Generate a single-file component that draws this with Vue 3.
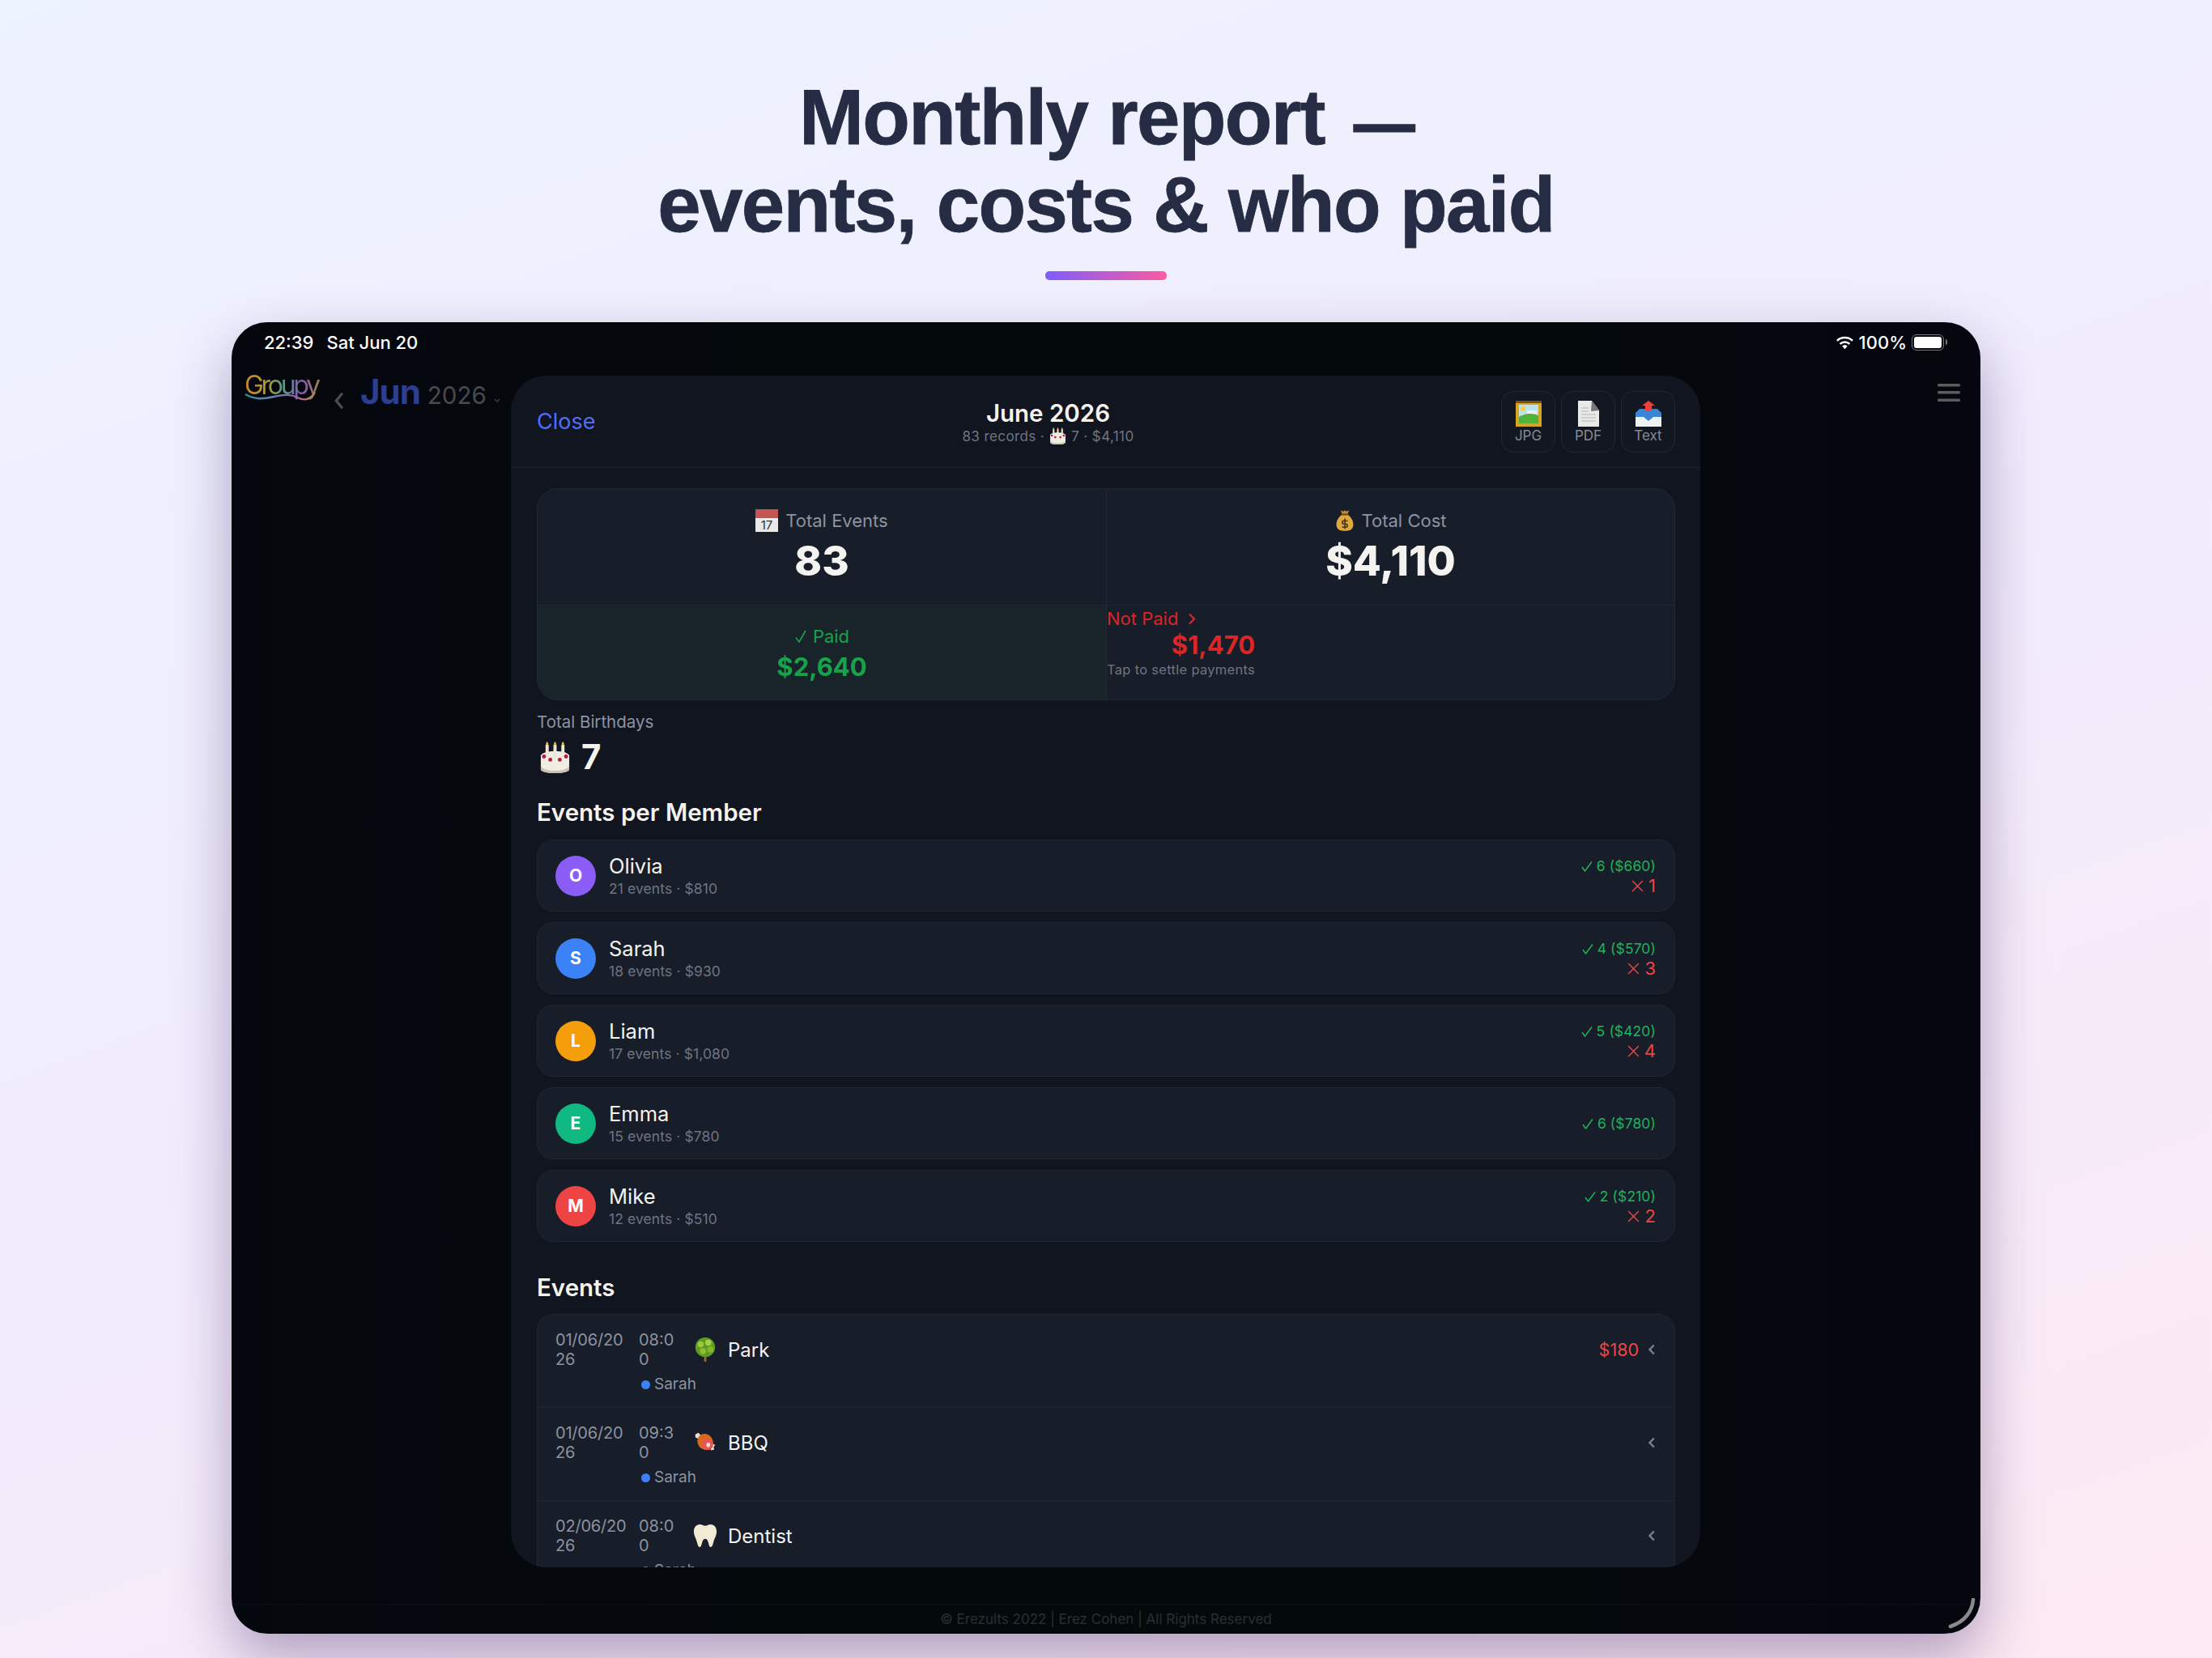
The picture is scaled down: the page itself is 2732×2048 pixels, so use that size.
<template>
  <div class="page">
    <header class="hero">
      <h1>Monthly report <span class="dash">—</span><br />events, costs &amp; who paid</h1>
      <div class="hero-bar" />
    </header>

    <div class="device">
      <div class="status">
        <div class="status-left">
          <span>22:39</span>
          <span>Sat Jun 20</span>
        </div>
        <div class="status-right">
          <svg class="wifi" viewBox="0 0 24 18">
            <path d="M12 17.5 8.6 13.8a5 5 0 0 1 6.8 0Z" fill="#fff" />
            <path d="M5.8 11a9 9 0 0 1 12.4 0" fill="none" stroke="#fff" stroke-width="2.6" />
            <path d="M2 6.8a14.5 14.5 0 0 1 20 0" fill="none" stroke="#fff" stroke-width="2.6" />
          </svg>
          <span>100%</span>
          <span class="battery"><span class="battery-fill" /></span>
        </div>
      </div>

      <div class="app-bar">
        <div class="logo">
          <span class="logo-text">Groupy</span>
          <svg class="logo-wave" viewBox="0 0 90 14">
            <path d="M1 3c12 7 22 6 36 3s22-3 30 1 14 4 22-6" fill="none" stroke="url(#wave)" stroke-width="2.4" />
            <defs>
              <linearGradient id="wave" x1="0" x2="1">
                <stop offset="0" stop-color="#2f8f8a" />
                <stop offset=".35" stop-color="#5f86b8" />
                <stop offset=".7" stop-color="#a35fb0" />
                <stop offset="1" stop-color="#b98a46" />
              </linearGradient>
            </defs>
          </svg>
        </div>
        <svg class="prev" viewBox="0 0 12 20"><path d="M10 1.500 3 10l7 8.500" fill="none" stroke="#4a4d50" stroke-width="3" /></svg>
        <span class="month">Jun</span>
        <span class="year">2026</span>
        <svg class="caret" viewBox="0 0 8 6"><path d="M1 1l3 3 3-3" fill="none" stroke="#3a3c3e" stroke-width="1.500" /></svg>
        <svg class="caret" viewBox="0 0 8 6"><path d="M1 1l3 3 3-3" fill="none" stroke="#4a4d50" stroke-width="1.500" /></svg>
      </div>

      <svg class="menu" viewBox="0 0 28 22">
        <rect y="0" width="28" height="3.500" rx="1.500" />
        <rect y="9" width="28" height="3.500" rx="1.500" />
        <rect y="18.500" width="28" height="3.500" rx="1.500" />
      </svg>

      <footer class="legal">© Erezults 2022 | Erez Cohen | All Rights Reserved</footer>

      <svg class="corner" viewBox="0 0 36 38">
        <path d="M33 2c-1 14-10 27-28 33" fill="none" stroke="#8a8a8a" stroke-width="4.500" stroke-linecap="round" />
      </svg>

      <section class="modal">
        <div class="modal-head">
          <button class="close">Close</button>
          <div class="modal-title">
            <div class="title">June 2026</div>
            <div class="subtitle">
              83 records ·
              <svg class="sub-cake" viewBox="0 0 40 40"><use href="#cake" /></svg>
              7 · $4,110
            </div>
          </div>
          <div class="exports">
            <button class="export">
              <svg viewBox="0 0 32 32">
                <rect x="0" y="0" width="32" height="32" fill="#d9a520" />
                <rect x="0" y="0" width="32" height="3" fill="#7a5210" />
                <rect x="4" y="5" width="24" height="23" fill="#bfe3ee" />
                <path d="M4 20c8-5 16-5 24-2v10H4Z" fill="#52b33a" />
                <circle cx="9" cy="10" r="3" fill="#f5d33a" />
                <path d="M14 12h12v4H14Z" fill="#eaf4f6" />
              </svg>
              <span>JPG</span>
            </button>
            <button class="export">
              <svg viewBox="0 0 32 32">
                <path d="M3 0h17l9 12v20H3Z" fill="#e9e9e9" />
                <path d="M20 0l9 12-10 1Z" fill="#777" />
                <path d="M7 9h9M7 13h9M7 17h18M7 21h18M7 25h18" stroke="#c6c6c6" stroke-width="1.500" />
              </svg>
              <span>PDF</span>
            </button>
            <button class="export">
              <svg viewBox="0 0 32 32">
                <path d="M0 15h32v17H0Z" fill="#eef0f2" />
                <path d="M5 10h22l5 5v5H22l-6 5-6-5H0v-5Z" fill="#3a86d6" />
                <path d="M12 11V6H8l8-6 8 6h-4v7h-8Z" fill="#ef3f3a" />
              </svg>
              <span>Text</span>
            </button>
          </div>
        </div>

        <div class="modal-body">
          <div class="stats">
            <div class="stat">
              <div class="stat-label">
                <svg class="stat-icon" viewBox="0 0 28 28">
                  <rect y="0" width="28" height="28" fill="#e9e9e9" />
                  <rect y="0" width="28" height="11" fill="#c25452" />
                  <text x="14" y="25" text-anchor="middle" class="cal-day">17</text>
                </svg>
                Total Events
              </div>
              <div class="stat-value">83</div>
            </div>
            <div class="stat stat-right">
              <div class="stat-label">
                <svg class="stat-icon bag" viewBox="0 0 28 32">
                  <path d="M10 7C3 13 1 19 2 24c1 6 7 7 12 7s11-1 12-7c1-5-1-11-8-17Z" fill="#dfa83c" />
                  <path d="M8 1l4 2 2-2 2 2 4-2-2 6h-8Z" fill="#c28c2e" />
                  <rect x="9" y="6" width="10" height="2.500" fill="#6f4a1b" />
                  <path d="M14 13v15M18 16.500h-5.500c-3 0-3 4.500 0 4.500h3c3 0 3 4.500 0 4.500H10" fill="none" stroke="#4e3a1a" stroke-width="2" />
                </svg>
                Total Cost
              </div>
              <div class="stat-value">$4,110</div>
            </div>
            <div class="stat-paid">
              <div class="paid-label">
                <svg viewBox="0 0 16 16"><path d="M2 9.500 6 15 14 1" fill="none" stroke="#16a34a" stroke-width="1.600" /></svg>
                Paid
              </div>
              <div class="paid-value">$2,640</div>
            </div>
            <div class="stat-unpaid">
              <div class="unpaid-inner">
                <div class="unpaid-label">
                  Not Paid
                  <svg viewBox="0 0 10 16"><path d="M2 2l6 6-6 6" fill="none" stroke="#dc2626" stroke-width="2.200" /></svg>
                </div>
                <div class="unpaid-value">$1,470</div>
                <div class="unpaid-hint">Tap to settle payments</div>
              </div>
            </div>
          </div>

          <div class="birthdays">
            <div class="birthdays-label">Total Birthdays</div>
            <div class="birthdays-value">
              <svg class="cake" viewBox="0 0 40 40">
                <defs>
                  <g id="cake">
                    <path d="M2 18c0-3 8-6 18-6s18 3 18 6v17c0 3-8 5-18 5S2 38 2 35Z" fill="#f1ece4" />
                    <path d="M2 30c0 4 8 7 18 7s18-3 18-7v5c0 3-8 5-18 5S2 38 2 35Z" fill="#c9c2b6" />
                    <rect x="8" y="4" width="4" height="16" fill="#efe6d8" />
                    <rect x="18" y="4" width="4" height="18" fill="#efe6d8" />
                    <rect x="28" y="4" width="4" height="16" fill="#efe6d8" />
                    <path d="M10 0c2 2 2 4 0 5-2-1-2-3 0-5ZM20 0c2 2 2 4 0 5-2-1-2-3 0-5ZM30 0c2 2 2 4 0 5-2-1-2-3 0-5Z" fill="#e7c23c" />
                    <circle cx="6" cy="19" r="2.500" fill="#b9163a" />
                    <circle cx="14" cy="23" r="2.500" fill="#b9163a" />
                    <circle cx="26" cy="23" r="2.500" fill="#b9163a" />
                    <circle cx="34" cy="19" r="2.500" fill="#b9163a" />
                  </g>
                </defs>
                <use href="#cake" />
              </svg>
              <span>7</span>
            </div>
          </div>

          <h2 class="section section-members">Events per Member</h2>
          <div class="members">
            <div v-for="m in members" :key="m.name" class="member">
              <span class="avatar" :style="{ background: m.color }">{{ m.name[0] }}</span>
              <div class="member-info">
                <div class="member-name">{{ m.name }}</div>
                <div class="member-sub">{{ m.events }} events · {{ m.cost }}</div>
              </div>
              <div class="member-tally">
                <div class="tally-ok">
                  <svg viewBox="0 0 14 14"><path d="M1 8l3.500 5L13 1.500" fill="none" stroke="#1fb25a" stroke-width="1.500" /></svg>
                  {{ m.paid }}
                </div>
                <div v-if="m.unpaid" class="tally-no">
                  <svg viewBox="0 0 14 14"><path d="M1 1l12 12M13 1 1 13" fill="none" stroke="#ef4444" stroke-width="1.300" /></svg>
                  {{ m.unpaid }}
                </div>
              </div>
            </div>
          </div>

          <h2 class="section section-events">Events</h2>
          <div class="events">
            <div v-for="e in events" :key="e.date + e.title" class="event">
              <div class="event-top">
                <div class="event-date">{{ e.date }}</div>
                <div class="event-time">{{ e.time }}</div>
                <svg class="event-icon" viewBox="0 0 32 32">
                  <template v-if="e.icon === 'tree'">
                    <rect x="14.500" y="24" width="3" height="8" fill="#9a6a1e" />
                    <circle cx="16" cy="13" r="13" fill="#5f9a22" />
                    <circle cx="10" cy="9" r="4" fill="#9cc83c" />
                    <circle cx="20" cy="7" r="4" fill="#a7cf45" />
                    <circle cx="23" cy="16" r="4" fill="#86b82f" />
                    <circle cx="13" cy="18" r="4" fill="#8fbe33" />
                  </template>
                  <template v-else-if="e.icon === 'meat'">
                    <path d="M3 5l4-2 3 3 10 9 5 2 4 2-2 3 1 3-4 1-2-3-4-3L7 11 3 9Z" fill="#e8e2d6" />
                    <ellipse cx="16" cy="15" rx="10" ry="11" transform="rotate(-35 16 15)" fill="#d9691c" />
                    <ellipse cx="19" cy="18" rx="7" ry="8" transform="rotate(-35 19 18)" fill="#e2565a" />
                    <ellipse cx="20" cy="19" rx="2.500" ry="3" fill="#f3d9cf" />
                  </template>
                  <template v-else>
                    <path d="M9 1c3 0 5 2 7 2s4-2 7-2c5 0 8 4 8 9 0 6-3 9-4 14-1 4-2 7-4 7-3 0-2-11-7-11s-4 11-7 11c-2 0-3-3-4-7C4 19 1 16 1 10c0-5 3-9 8-9Z" fill="#f3ead6" />
                  </template>
                </svg>
                <span class="event-title">{{ e.title }}</span>
                <span v-if="e.amount" class="event-amount">{{ e.amount }}</span>
                <svg class="event-chevron" viewBox="0 0 8 14"><path d="M6.800 1.500 1.500 7l5.300 5.500" fill="none" stroke="#7b818c" stroke-width="2.400" /></svg>
              </div>
              <div class="event-owner">
                <span class="owner-dot" />
                Sarah
              </div>
            </div>
          </div>
        </div>
      </section>
    </div>
  </div>
</template>

<script setup>
const members = [
  { name: 'Olivia', events: 21, cost: '$810', paid: '6 ($660)', unpaid: 1, color: '#8b5cf6' },
  { name: 'Sarah', events: 18, cost: '$930', paid: '4 ($570)', unpaid: 3, color: '#3b82f6' },
  { name: 'Liam', events: 17, cost: '$1,080', paid: '5 ($420)', unpaid: 4, color: '#f59e0b' },
  { name: 'Emma', events: 15, cost: '$780', paid: '6 ($780)', unpaid: 0, color: '#10b981' },
  { name: 'Mike', events: 12, cost: '$510', paid: '2 ($210)', unpaid: 2, color: '#ef4444' },
];

const events = [
  { date: '01/06/2026', time: '08:00', title: 'Park', icon: 'tree', amount: '$180' },
  { date: '01/06/2026', time: '09:30', title: 'BBQ', icon: 'meat' },
  { date: '02/06/2026', time: '08:00', title: 'Dentist', icon: 'tooth' },
];
</script>

<style>
body {
  margin: 0;
}
</style>

<style scoped>
.page {
  width: 2732px;
  height: 2048px;
  overflow: hidden;
  box-sizing: border-box;
  padding-top: 91px;
  background: linear-gradient(160deg, #edf3ff 0%, #f1ecfd 50%, #fde9f3 100%);
  font-family: Inter, "Liberation Sans", sans-serif;
}

.hero {
  text-align: center;
}

.hero h1 {
  margin: 0;
  font-family: "Liberation Sans", Arial, sans-serif;
  font-size: 96px;
  line-height: 108px;
  font-weight: 700;
  letter-spacing: -1.650px;
  color: #252c44;
  -webkit-text-stroke: 0.8px #252c44;
}

.dash {
  margin-left: 12px;
  font-size: 74px;
  line-height: 1;
  -webkit-text-stroke: 3px #252c44;
}

.hero-bar {
  width: 150px;
  height: 11px;
  margin: 28px auto 0;
  border-radius: 5px;
  background: linear-gradient(90deg, #7f5cf9, #fb5ba4);
}

.device {
  position: relative;
  display: flex;
  flex-direction: column;
  width: 2160px;
  height: 1620px;
  margin: 52px auto 0;
  border-radius: 44px;
  overflow: hidden;
  background: linear-gradient(90deg, #05070e 0%, #040a0b 45%, #040a0b 70%, #05060f 100%);
  box-shadow: 0 30px 70px rgba(50, 25, 90, 0.36);
}

.status {
  display: flex;
  justify-content: space-between;
  align-items: center;
  height: 50px;
  padding: 0 38px 0 40px;
  font-size: 22px;
  font-weight: 500;
  color: #fff;
}

.status-left {
  display: flex;
  gap: 16px;
}

.status-right {
  display: flex;
  align-items: center;
  gap: 6px;
}

.wifi {
  width: 23px;
  height: 18px;
}

.battery {
  position: relative;
  display: block;
  box-sizing: border-box;
  width: 40px;
  height: 20px;
  margin-right: 7px;
  padding: 2px;
  border: 1.500px solid #777;
  border-radius: 6px;
}

.battery::after {
  content: "";
  position: absolute;
  right: -5px;
  top: 5px;
  width: 2px;
  height: 7px;
  border-radius: 0 2px 2px 0;
  background: #777;
}

.battery-fill {
  display: block;
  height: 100%;
  border-radius: 3px;
  background: #fff;
}

.app-bar {
  display: flex;
  align-items: flex-end;
  height: 62px;
  padding-left: 16px;
}

.logo {
  position: relative;
  width: 88px;
  height: 52px;
  margin-right: 22px;
}

.logo-text {
  display: block;
  width: max-content;
  padding-right: 4px;
  font-size: 32px;
  line-height: 36px;
  letter-spacing: -3.300px;
  font-weight: 400;
  background: linear-gradient(90deg, #c8842c, #b09a30 30%, #4aa089 50%, #8a56b8 75%, #9a8a3a);
  background-clip: text;
  -webkit-background-clip: text;
  color: transparent;
}

.logo-wave {
  position: absolute;
  left: 0;
  top: 26px;
  width: 88px;
  height: 14px;
}

.prev {
  width: 13px;
  height: 22px;
  margin: 0 20px 4px 0;
}

.month {
  margin-right: 9px;
  font-size: 42px;
  line-height: 52px;
  font-weight: 700;
  letter-spacing: -1px;
  color: #2c3e8f;
}

.year {
  font-size: 29.500px;
  line-height: 44px;
  color: #484a4c;
}

.caret {
  width: 8px;
  height: 6px;
  margin: 0 0 12px 9px;
}

.caret + .caret {
  margin-left: 17px;
}

.menu {
  position: absolute;
  top: 76px;
  right: 25px;
  width: 28px;
  height: 22px;
  fill: #5c5c5c;
}

.legal {
  position: absolute;
  left: 0;
  right: 0;
  bottom: 0;
  height: 36px;
  border-top: 1px solid #0d1114;
  text-align: center;
  font-size: 17px;
  line-height: 36px;
  color: #2b2f33;
}

.corner {
  position: absolute;
  right: 6px;
  bottom: 6px;
  width: 36px;
  height: 38px;
}

.modal {
  position: absolute;
  left: 345px;
  top: 66px;
  display: flex;
  flex-direction: column;
  width: 1469px;
  height: 1472px;
  border-radius: 44px;
  overflow: hidden;
  background: #111520;
}

.modal-head {
  flex-shrink: 0;
  display: flex;
  align-items: center;
  height: 113px;
  padding: 0 31px 0 32px;
  border-bottom: 1px solid #1d222e;
}

.close {
  width: 72px;
  padding: 0;
  border: none;
  background: none;
  font: inherit;
  font-size: 27px;
  text-align: left;
  color: #4f6ef7;
}

.modal-title {
  flex: 1;
  text-align: center;
}

.title {
  font-size: 29.500px;
  line-height: 36px;
  font-weight: 600;
  color: #f5f3ef;
}

.subtitle {
  display: flex;
  justify-content: center;
  align-items: center;
  gap: 6px;
  font-size: 17px;
  line-height: 22px;
  letter-spacing: 0.4px;
  color: #6f7480;
}

.sub-cake {
  width: 21px;
  height: 21px;
}

.exports {
  display: flex;
  gap: 7px;
}

.export {
  display: flex;
  flex-direction: column;
  align-items: center;
  box-sizing: border-box;
  width: 67px;
  height: 76px;
  padding: 11px 0 0;
  border: 1px solid #232834;
  border-radius: 15px;
  background: #131722;
  font: inherit;
  font-size: 17px;
  line-height: 22px;
  color: #858a96;
}

.export svg {
  width: 32px;
  height: 32px;
}

.modal-body {
  flex: 1;
  min-height: 0;
  overflow: hidden;
  padding: 25px 31px 0 32px;
}

.stats {
  display: grid;
  grid-template-columns: 702px 1fr;
  grid-template-rows: 144px 116px;
  border: 1px solid #232834;
  border-radius: 26px;
  overflow: hidden;
  background: #171d29;
}

.stat {
  display: flex;
  flex-direction: column;
  align-items: center;
  padding-top: 25px;
  border-bottom: 1px solid #232834;
}

.stat-right {
  border-left: 1px solid #232834;
}

.stat-label {
  display: flex;
  align-items: center;
  gap: 9px;
  font-size: 22px;
  line-height: 28px;
  color: #8d93a0;
}

.stat-icon {
  width: 28px;
  height: 28px;
}

.stat-icon.bag {
  width: 24px;
}

.cal-day {
  font-family: Inter, sans-serif;
  font-size: 15px;
  fill: #333;
}

.stat-value {
  margin-top: 6px;
  font-size: 51px;
  line-height: 60px;
  font-weight: 800;
  color: #f5f3ef;
}

.stat-paid {
  display: flex;
  flex-direction: column;
  align-items: center;
  padding-top: 23px;
  background: #18232a;
}

.paid-label {
  display: flex;
  align-items: center;
  gap: 7px;
  font-size: 22px;
  line-height: 30px;
  color: #16a34a;
}

.paid-label svg {
  width: 16px;
  height: 16px;
}

.paid-value {
  margin-top: 2px;
  font-size: 31px;
  line-height: 42px;
  font-weight: 700;
  color: #16a34a;
}

.stat-unpaid {
  border-left: 1px solid #232834;
}

.unpaid-inner {
  display: inline-flex;
  flex-direction: column;
  padding-top: 2px;
}

.unpaid-label {
  display: flex;
  align-items: center;
  gap: 12px;
  font-size: 22px;
  line-height: 28px;
  color: #dc2626;
}

.unpaid-label svg {
  width: 10px;
  height: 17px;
}

.unpaid-value {
  text-align: right;
  font-size: 31px;
  line-height: 38px;
  font-weight: 700;
  color: #dc2626;
}

.unpaid-hint {
  margin-top: 1px;
  font-size: 16.500px;
  line-height: 20px;
  letter-spacing: 0.3px;
  color: #6f7480;
}

.birthdays {
  margin-top: 14px;
}

.birthdays-label {
  font-size: 20.500px;
  line-height: 26px;
  color: #8d93a0;
}

.birthdays-value {
  display: flex;
  align-items: center;
  gap: 13px;
  margin-top: 5px;
  padding-left: 3px;
  font-size: 42px;
  line-height: 50px;
  font-weight: 700;
  color: #f5f3ef;
}

.cake {
  width: 39px;
  height: 39px;
}

.section {
  margin: 0;
  font-size: 29.500px;
  line-height: 38px;
  font-weight: 600;
  color: #f5f3ef;
}

.section-members {
  margin-top: 24px;
}

.section-events {
  margin-top: 37px;
}

.members {
  display: flex;
  flex-direction: column;
  gap: 13px;
  margin-top: 15px;
}

.member {
  display: flex;
  align-items: center;
  box-sizing: border-box;
  height: 89px;
  padding: 0 23px 0 22px;
  border: 1px solid #212632;
  border-radius: 20px;
  background: #171d29;
}

.avatar {
  display: flex;
  align-items: center;
  justify-content: center;
  width: 50px;
  height: 50px;
  border-radius: 50%;
  font-size: 21px;
  font-weight: 700;
  color: #fff;
}

.member-info {
  flex: 1;
  margin-left: 16px;
}

.member-name {
  font-size: 25.500px;
  line-height: 30px;
  color: #f5f3ef;
}

.member-sub {
  margin-top: 3px;
  font-size: 17.500px;
  line-height: 20px;
  letter-spacing: 0.1px;
  color: #6f7480;
}

.member-tally {
  text-align: right;
}

.tally-ok {
  font-size: 17.500px;
  line-height: 24px;
  letter-spacing: 0.1px;
  color: #1fb25a;
}

.tally-ok svg {
  width: 14px;
  height: 14px;
  vertical-align: -1px;
}

.tally-no {
  font-size: 22px;
  line-height: 24px;
  color: #ef4444;
}

.tally-no svg {
  width: 15px;
  height: 15px;
}

.events {
  margin-top: 14px;
  border: 1px solid #212632;
  border-radius: 20px;
  background: #171d29;
}

.event {
  box-sizing: border-box;
  height: 115px;
  padding: 18px 24px 0 22px;
  border-bottom: 1px solid #212632;
}

.event-top {
  display: flex;
  align-items: center;
  height: 50px;
}

.event-date {
  width: 88px;
  margin-right: 15px;
  font-size: 20px;
  line-height: 24.500px;
  letter-spacing: -0.2px;
  word-break: break-all;
  color: #8d93a0;
}

.event-time {
  width: 50px;
  font-size: 20px;
  line-height: 24.500px;
  word-break: break-all;
  color: #8d93a0;
}

.event-icon {
  width: 30px;
  height: 30px;
  margin: 0 13px 0 17px;
}

.event-title {
  flex: 1;
  font-size: 24px;
  color: #f5f3ef;
}

.event-amount {
  margin-right: 12px;
  font-size: 21.500px;
  color: #ef4444;
}

.event-chevron {
  width: 8px;
  height: 14px;
}

.event-owner {
  display: flex;
  align-items: center;
  gap: 5px;
  margin: 7px 0 0 106px;
  font-size: 19px;
  line-height: 22px;
  color: #8d93a0;
}

.owner-dot {
  width: 11px;
  height: 11px;
  border-radius: 50%;
  background: #3b82f6;
}
</style>
